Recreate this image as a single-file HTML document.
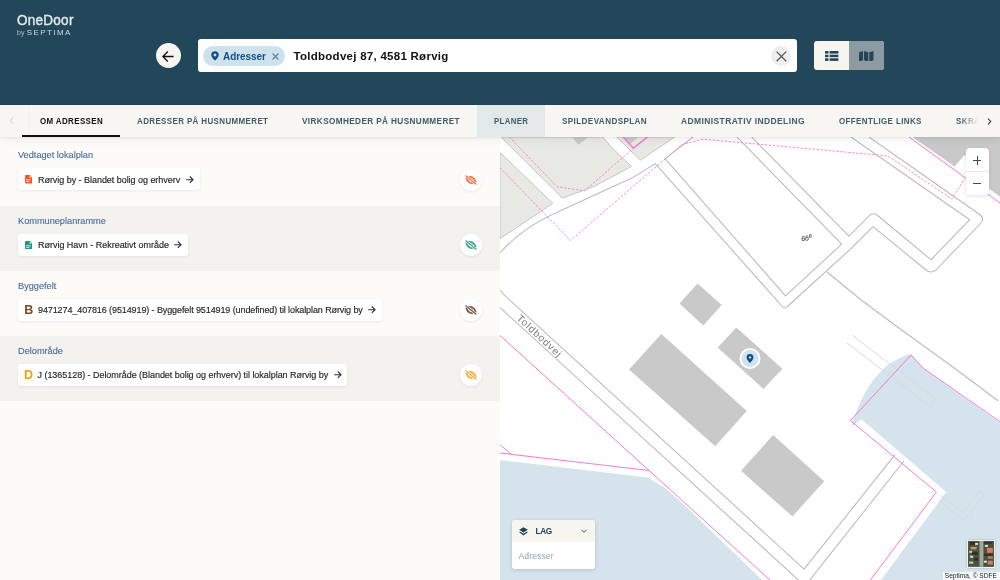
<!DOCTYPE html>
<html><head><meta charset="utf-8">
<style>
*{box-sizing:border-box;margin:0;padding:0}
html,body{width:1000px;height:580px;overflow:hidden;background:#fcfbf7}
body{position:relative;font-family:"Liberation Sans",sans-serif}
.abs{position:absolute}
#hdr{left:0;top:0;width:1000px;height:105.5px;background:#22475a}
.logo1{left:16.6px;top:11px;color:#e3e7ea;font-size:15px;font-weight:normal;-webkit-text-stroke:0.45px #e3e7ea;letter-spacing:0.3px;white-space:nowrap;transform:scaleX(0.9);transform-origin:0 0}
.logo2{left:17px;top:28px;color:#d4dbe0;font-size:8px;white-space:nowrap}
.back{left:156px;top:43.3px;width:25.2px;height:25.2px;border-radius:50%;background:#f7f5f0}
.search{left:197.6px;top:39.2px;width:599.6px;height:33px;border-radius:3px;background:#fff}
.chip{left:203.2px;top:46px;width:81.6px;height:20px;border-radius:10px;background:#cfe2ec}
.chiptxt{left:223px;top:50.5px;font-size:10px;letter-spacing:-0.08px;font-weight:bold;color:#104d8a;white-space:nowrap}
.q{left:293.5px;top:49.5px;font-size:11.5px;letter-spacing:0.27px;font-weight:bold;color:#111;white-space:nowrap}
.clr{left:771px;top:46px;width:20px;height:20px;border-radius:50%;background:#eeeff0}
.tog{left:814px;top:41.2px;width:69.6px;height:28.8px;border-radius:3px;background:#f7f5f0;overflow:hidden}
.tog2{left:35px;top:0;width:34.6px;height:28.8px;background:#8e9aa2}
#tabs{left:0;top:105px;width:1000px;height:32px;background:#f7f6f2;box-shadow:0 1px 3px rgba(0,0,0,0.06),0 3px 10px rgba(0,0,0,0.06);z-index:5}
.tab{top:11px;font-size:9.3px;transform-origin:0 0;font-weight:bold;color:#3f5b6c;white-space:nowrap}
.sec{left:0;width:500px;height:65px}
.stitle{left:18px;font-size:9.2px;color:#45699a;white-space:nowrap;-webkit-text-stroke:0.1px #45699a}
.card{left:18px;height:22px;background:#fff;border-radius:3px;box-shadow:0 1px 3px rgba(0,0,0,0.07)}
.ctxt{font-size:9px;color:#262626;white-space:nowrap;top:6.5px;left:20px;-webkit-text-stroke:0.15px #262626}
.eye{left:460px;width:22px;height:22px;border-radius:50%;background:#fff;box-shadow:0 1px 3px rgba(0,0,0,0.08)}
#map{left:500px;top:137px;width:500px;height:443px;background:#fff;overflow:hidden}
</style></head><body><div id="root" style="position:absolute;left:0;top:0;width:1000px;height:580px;will-change:transform">
<div id="hdr" class="abs">
  <div class="abs logo1">OneDoor</div>
  <div class="abs logo2"><span style="font-size:7px;color:#aebbc3">by</span> <span style="letter-spacing:1.45px">SEPTIMA</span></div>
  <div class="abs back"><svg class="abs" style="left:6.4px;top:7.3px" width="12" height="11" viewBox="0 0 12 11"><path d="M11.6,5.5 L1,5.5 M5.8,0.6 L0.9,5.5 L5.8,10.4" fill="none" stroke="#111" stroke-width="1.35"/></svg></div>
  <div class="abs search"></div>
  <div class="abs chip"></div>
  <svg class="abs" style="left:211px;top:51px" width="8" height="10" viewBox="0 0 8 10"><path d="M4,0.2 C6.1,0.2 7.8,1.9 7.8,4 C7.8,6.3 4,9.6 4,9.6 C4,9.6 0.2,6.3 0.2,4 C0.2,1.9 1.9,0.2 4,0.2 Z M4,2.5 A1.45,1.45 0 1 0 4.01,2.5 Z" fill="#104d8a" fill-rule="evenodd"/></svg>
  <div class="abs chiptxt">Adresser</div>
  <svg class="abs" style="left:272.2px;top:52.6px" width="7" height="7" viewBox="0 0 7 7"><path d="M0.5,0.5 L6.5,6.5 M6.5,0.5 L0.5,6.5" stroke="#5b84ab" stroke-width="1.2"/></svg>
  <div class="abs q">Toldbodvej 87, 4581 Rørvig</div>
  <div class="abs clr"><svg class="abs" style="left:4.6px;top:4.6px" width="11" height="11" viewBox="0 0 11 11"><path d="M0.6,0.6 L10.2,10.2 M10.2,0.6 L0.6,10.2" stroke="#555" stroke-width="1.25"/></svg></div>
  <div class="abs tog"><div class="abs tog2"></div>
    <svg class="abs" style="left:11px;top:9.8px" width="13.5" height="10" viewBox="0 0 13.5 10"><g fill="#22475a"><rect x="0" y="0" width="3.5" height="2.6"/><rect x="4.6" y="0" width="8.8" height="2.6"/><rect x="0" y="3.7" width="3.5" height="2.5"/><rect x="4.6" y="3.7" width="8.8" height="2.5"/><rect x="0" y="7.3" width="3.5" height="2.6"/><rect x="4.6" y="7.3" width="8.8" height="2.6"/></g></svg>
    <svg class="abs" style="left:45px;top:9.6px" width="14.5" height="10.6" viewBox="0 0 14.5 10.6"><g fill="#22475a"><path d="M0,1.3 L4,0 L4,9.3 L0,10.6 Z"/><path d="M5,0 L9.3,1.3 L9.3,10.6 L5,9.3 Z"/><path d="M10.3,1.3 L14.5,0 L14.5,9.3 L10.3,10.6 Z"/></g></svg>
  </div>
</div>
<div id="tabs" class="abs">
  <div class="abs" style="left:0;top:0;width:28px;height:32px;background:#f7f6f2;box-shadow:1px 0 2px rgba(0,0,0,0.03)"></div>
  <svg class="abs" style="left:9px;top:12px" width="5" height="7" viewBox="0 0 5 7"><path d="M4,0.6 L1.2,3.5 L4,6.4" fill="none" stroke="#c8cacb" stroke-width="1"/></svg>
  <div class="abs tab" style="left:39.6px;color:#111;;letter-spacing:0.45px;transform:scaleX(0.855)">OM ADRESSEN</div>
  <div class="abs" style="left:22px;top:30px;width:98px;height:2px;background:#111"></div>
  <div class="abs tab" style="left:137px;;letter-spacing:0.45px;transform:scaleX(0.856)">ADRESSER PÅ HUSNUMMERET</div>
  <div class="abs tab" style="left:302px;;letter-spacing:0.45px;transform:scaleX(0.88)">VIRKSOMHEDER PÅ HUSNUMMERET</div>
  <div class="abs" style="left:477px;top:0;width:68px;height:32px;background:#e3e8e9"></div>
  <div class="abs tab" style="left:494px;;letter-spacing:0.45px;transform:scaleX(0.84)">PLANER</div>
  <div class="abs tab" style="left:562px;;letter-spacing:0.45px;transform:scaleX(0.873)">SPILDEVANDSPLAN</div>
  <div class="abs tab" style="left:681px;;letter-spacing:0.45px;transform:scaleX(0.91)">ADMINISTRATIV INDDELING</div>
  <div class="abs tab" style="left:839px;;letter-spacing:0.45px;transform:scaleX(0.857)">OFFENTLIGE LINKS</div>
  <div class="abs tab" style="left:955.6px;letter-spacing:0.45px;transform:scaleX(0.86)">SKRÅ</div>
  <div class="abs" style="left:960px;top:0;width:18px;height:32px;background:linear-gradient(90deg,rgba(247,246,242,0),#f7f6f2)"></div>
  <div class="abs" style="left:978px;top:0;width:22px;height:32px;background:#f7f6f2"></div>
  <svg class="abs" style="left:986.5px;top:12.5px" width="5" height="7" viewBox="0 0 5 7"><path d="M1,0.6 L3.8,3.5 L1,6.4" fill="none" stroke="#444" stroke-width="1.1"/></svg>
</div>
<div class="abs sec" style="top:140.3px;background:#fcfbf7">
  <div class="abs stitle" style="top:10px">Vedtaget lokalplan</div>
  <div class="abs card" style="top:28px;width:182px"><svg class="abs" style="left:7px;top:7px" width="7.2" height="8.6" viewBox="0 0 7.2 8.6"><path d="M1,0 L4.8,0 L7.2,2.4 L7.2,7.6 Q7.2,8.6 6.2,8.6 L1,8.6 Q0,8.6 0,7.6 L0,1 Q0,0 1,0 Z" fill="#ef5a22"/><circle cx="5.2" cy="2.1" r="0.8" fill="#fff"/><rect x="0.9" y="4.3" width="4.8" height="0.9" fill="#fff" opacity="0.85"/><rect x="0.9" y="5.9" width="3.6" height="0.9" fill="#fff" opacity="0.85"/></svg><div class="abs ctxt" style="letter-spacing:-0.04px">Rørvig by - Blandet bolig og erhverv</div><svg class="abs" style="left:168px;top:7.4px" width="8" height="8" viewBox="0 0 8 8"><path d="M0.2,3.7 L7,3.7 M3.8,0.5 L7,3.7 L3.8,6.9" fill="none" stroke="#333" stroke-width="1.15"/></svg></div>
  <div class="abs eye" style="top:28.3px"><svg class="abs" style="left:5px;top:6px" width="12" height="10" viewBox="0 0 12 10"><g transform="rotate(22 6 5)"><path d="M1,5 Q6,-1 11,5 Q6,11 1,5 Z" fill="none" stroke="#f07048" stroke-width="1.7"/><circle cx="6.2" cy="4.8" r="1.6" fill="#f07048"/></g><path d="M0.6,0.5 L11.4,9.5" stroke="#fff" stroke-width="2.4"/><path d="M0.6,0.5 L11.4,9.5" stroke="#f07048" stroke-width="1.15"/></svg></div>
</div>
<div class="abs sec" style="top:205.5px;background:#f3f2ee">
  <div class="abs stitle" style="top:10px">Kommuneplanramme</div>
  <div class="abs card" style="top:28px;width:170px"><svg class="abs" style="left:7px;top:7px" width="7.2" height="8.6" viewBox="0 0 7.2 8.6"><path d="M1,0 L4.8,0 L7.2,2.4 L7.2,7.6 Q7.2,8.6 6.2,8.6 L1,8.6 Q0,8.6 0,7.6 L0,1 Q0,0 1,0 Z" fill="#1e9888"/><circle cx="5.2" cy="2.1" r="0.8" fill="#fff"/><rect x="0.9" y="4.3" width="4.8" height="0.9" fill="#fff" opacity="0.85"/><rect x="0.9" y="5.9" width="3.6" height="0.9" fill="#fff" opacity="0.85"/></svg><div class="abs ctxt" style="letter-spacing:-0.02px">Rørvig Havn - Rekreativt område</div><svg class="abs" style="left:155.8px;top:7.4px" width="8" height="8" viewBox="0 0 8 8"><path d="M0.2,3.7 L7,3.7 M3.8,0.5 L7,3.7 L3.8,6.9" fill="none" stroke="#333" stroke-width="1.15"/></svg></div>
  <div class="abs eye" style="top:28.3px"><svg class="abs" style="left:5px;top:6px" width="12" height="10" viewBox="0 0 12 10"><g transform="rotate(22 6 5)"><path d="M1,5 Q6,-1 11,5 Q6,11 1,5 Z" fill="none" stroke="#3aa595" stroke-width="1.7"/><circle cx="6.2" cy="4.8" r="1.6" fill="#3aa595"/></g><path d="M0.6,0.5 L11.4,9.5" stroke="#fff" stroke-width="2.4"/><path d="M0.6,0.5 L11.4,9.5" stroke="#3aa595" stroke-width="1.15"/></svg></div>
</div>
<div class="abs sec" style="top:270.5px;background:#fcfbf7">
  <div class="abs stitle" style="top:10px">Byggefelt</div>
  <div class="abs card" style="top:28px;width:364px"><div class="abs" style="left:6.2px;top:4.6px;font-size:12.5px;font-weight:bold;color:#7a4a2f;line-height:14px">B</div><div class="abs ctxt" style="letter-spacing:-0.1px">9471274_407816 (9514919) - Byggefelt 9514919 (undefined) til lokalplan Rørvig by</div><svg class="abs" style="left:350px;top:7.4px" width="8" height="8" viewBox="0 0 8 8"><path d="M0.2,3.7 L7,3.7 M3.8,0.5 L7,3.7 L3.8,6.9" fill="none" stroke="#333" stroke-width="1.15"/></svg></div>
  <div class="abs eye" style="top:28.3px"><svg class="abs" style="left:5px;top:6px" width="12" height="10" viewBox="0 0 12 10"><g transform="rotate(22 6 5)"><path d="M1,5 Q6,-1 11,5 Q6,11 1,5 Z" fill="none" stroke="#7b5847" stroke-width="1.7"/><circle cx="6.2" cy="4.8" r="1.6" fill="#7b5847"/></g><path d="M0.6,0.5 L11.4,9.5" stroke="#fff" stroke-width="2.4"/><path d="M0.6,0.5 L11.4,9.5" stroke="#7b5847" stroke-width="1.15"/></svg></div>
</div>
<div class="abs sec" style="top:335.8px;background:#f3f2ee">
  <div class="abs stitle" style="top:10px">Delområde</div>
  <div class="abs card" style="top:28px;width:329px"><div class="abs" style="left:6px;top:4.6px;font-size:12.5px;font-weight:bold;color:#f2a20a;line-height:14px">D</div><div class="abs ctxt" style="left:19.5px;letter-spacing:-0.04px">J (1365128) - Delområde (Blandet bolig og erhverv) til lokalplan Rørvig by</div><svg class="abs" style="left:315.8px;top:7.4px" width="8" height="8" viewBox="0 0 8 8"><path d="M0.2,3.7 L7,3.7 M3.8,0.5 L7,3.7 L3.8,6.9" fill="none" stroke="#333" stroke-width="1.15"/></svg></div>
  <div class="abs eye" style="top:28.3px"><svg class="abs" style="left:5px;top:6px" width="12" height="10" viewBox="0 0 12 10"><g transform="rotate(22 6 5)"><path d="M1,5 Q6,-1 11,5 Q6,11 1,5 Z" fill="none" stroke="#f1ad3c" stroke-width="1.7"/><circle cx="6.2" cy="4.8" r="1.6" fill="#f1ad3c"/></g><path d="M0.6,0.5 L11.4,9.5" stroke="#fff" stroke-width="2.4"/><path d="M0.6,0.5 L11.4,9.5" stroke="#f1ad3c" stroke-width="1.15"/></svg></div>
</div>
<div id="map" class="abs">
<svg class="abs" style="left:0;top:0" width="500" height="443" viewBox="500 137 500 443">
<rect x="500" y="137" width="500" height="443" fill="#ffffff"/>
<g fill="#d4e3ec">
<polygon points="500,460 647.6,477.4 665,488 680,500.9 762,580 500,580"/>
<path d="M851,427 Q869,367 908,354.6 L911,354.6 L923.4,368.8 L1000,423 L1000,580 L881,580 L946.2,492 L861.4,419.2 Z"/>
</g>
<g fill="#e9e9e4" stroke="#c6c6c2" stroke-width="1">
<polygon points="501,137 562.4,198.2 595,186 631.4,166.4 611.8,147.5 602.7,137"/>
<polygon points="500,152.5 552.9,203.4 500,238.6"/>
<polygon points="616.7,137 640.5,160.1 674.8,137"/>
</g>
<g fill="#c9c9c9">
<polygon points="571.9,137 588.7,137 578.2,144.7"/>
<polygon points="624,137 638,137 630.7,144"/>
<polygon points="912.4,137 1000,137 1000,196.8 989,188.6 964.8,154.8 954.5,166.5"/>
<polygon points="697.6,283.4 721.6,304.9 703.3,325.6 679.5,303.6"/>
<polygon points="736.4,327.4 782.4,368.8 763.5,389 717.7,347.6"/>
<polygon points="661.4,334.1 746.7,411 715.2,446.2 629,369.6"/>
<polygon points="773.1,435.1 824.3,481.3 792.4,516.4 741.1,470.8"/>
</g>
<g fill="none" stroke="#dadada" stroke-width="1">
<polyline points="852.3,335.2 935,398.5 931,407 847,343"/>
<polyline points="940.2,494.7 963.5,512.8 979,490.8 984.2,494.6 963.5,520.5 939,499.8"/>
</g>
<g fill="none" stroke="#bababa" stroke-width="1.05" stroke-linejoin="round">
<path d="M500,253 Q522,227 562.6,209.7 L632.8,177.6 L655.2,163.6 L781,305 Q784.2,310 788,306 L851,248.6 L873.1,226.6 L926,270 Q931,274 936,270 L981,223 Q985,218 979,214 L869,137"/>
<path d="M693,137 L665,158.7 L785.5,295.9 L841.7,244.1 L736.9,137"/>
<path d="M751.6,137 L848.9,236.2 L869,216 Q873,212 877,215 L931,259.7 L969.7,219.7 L851,137"/>
<path d="M827,272 L861.3,300 L901.5,330 L951.9,366.2 L998.4,401"/>
<path d="M500,290.3 Q505,296 510.3,300.7 L804.1,569.1 L895,454.6"/>
<path d="M500,307.6 L805,586 L904,461"/>
</g>
<g fill="none" stroke="#f27ad2" stroke-width="1">
<path d="M500,335.5 L771,581"/>
<path d="M500,453 L649,470.5"/>
<path d="M500,444.8 L511.6,454.5"/>
<path d="M850.5,420.5 L911,355 L923.4,368.3 L1000,421.8"/>
<path d="M850.5,420.5 L936.4,492 L870.4,580"/>
<path d="M909,137 L1000,203"/>
<path d="M623,137 L633.5,148.2 L647.5,137" stroke-width="1.5"/>
</g>
<g fill="none" stroke="#f58ad8" stroke-width="1" stroke-dasharray="2.4,1.6">
<path d="M509.5,137 L557,186.8 L584.6,190.8 L633.5,148.2"/>
<path d="M500,167.8 L570.5,240.5 L617.4,200 L681.8,144.7 L702.6,139.1 L830,150.7 L888,156 L951.8,199 L965,178.5"/>
</g>
<text transform="translate(537.2,338.6) rotate(43)" text-anchor="middle" font-family="Liberation Sans" font-size="10.2" letter-spacing="0.9" fill="#7c7c7c" stroke="#ffffff" stroke-width="1.6" paint-order="stroke" stroke-linejoin="round">Toldbodvej</text>
<text x="801" y="240.5" transform="rotate(-8 806 238)" font-family="Liberation Sans" font-style="italic" font-size="7" fill="#222">66<tspan font-size="5" dy="-2">B</tspan></text>
<circle cx="750" cy="358.4" r="9.5" fill="#cfe3ee" stroke="#ffffff" stroke-width="2"/>
<path d="M750,354 a3.4,3.4 0 0 1 3.4,3.4 c0,2.3 -3.4,5.4 -3.4,5.4 c0,0 -3.4,-3.1 -3.4,-5.4 a3.4,3.4 0 0 1 3.4,-3.4 z M750,356.2 a1.2,1.2 0 1 0 0.01,0 z" fill="#0f4c86" fill-rule="evenodd"/>
</svg>
<div class="abs" style="left:465.5px;top:10.9px;width:23.2px;height:46.9px;background:#fff;border-radius:4px;box-shadow:0 1px 4px rgba(0,0,0,0.12)">
  <div class="abs" style="left:0;top:23.4px;width:23.2px;height:1px;background:#e3e9ec"></div>
  <div class="abs" style="left:7.4px;top:11.9px;width:8.4px;height:1.2px;background:#2f4e60"></div>
  <div class="abs" style="left:11px;top:8.3px;width:1.2px;height:8.4px;background:#2f4e60"></div>
  <div class="abs" style="left:7.4px;top:35.1px;width:8.4px;height:1.2px;background:#2f4e60"></div>
</div>
<div class="abs" style="left:12px;top:383px;width:83px;height:49px;background:#fff;border-radius:3px;box-shadow:0 1px 4px rgba(0,0,0,0.15);overflow:hidden">
  <div class="abs" style="left:0;top:0;width:83px;height:21.5px;background:#f7f5f0"></div>
  <svg class="abs" style="left:6.5px;top:6.5px" width="9" height="9" viewBox="0 0 9 9"><path d="M4.5,0.2 L8.8,2.8 L4.5,5.4 L0.2,2.8 Z" fill="#1f4255"/><path d="M0.9,4.6 L4.5,6.8 L8.1,4.6 L8.8,5.3 L4.5,8.6 L0.2,5.3 Z" fill="#1f4255"/></svg>
  <div class="abs" style="left:23.5px;top:6.2px;font-size:8.3px;letter-spacing:-0.35px;font-weight:bold;color:#1f4255;white-space:nowrap">LAG</div>
  <svg class="abs" style="left:69.3px;top:9px" width="6" height="5" viewBox="0 0 6 5"><path d="M0.5,0.8 L3,3.3 L5.5,0.8" fill="none" stroke="#1f4255" stroke-width="0.9"/></svg>
  <div class="abs" style="left:6.5px;top:30.5px;font-size:8.6px;letter-spacing:0.1px;color:#94a3ab;white-space:nowrap">Adresser</div>
</div>
<div class="abs" style="left:466.7px;top:403.3px;width:28.5px;height:28px;background:#f4f2ee;padding:1.2px;box-shadow:0 0 2px rgba(0,0,0,0.25)">
  <svg width="26" height="25.6" viewBox="0 0 26 26" style="display:block"><rect width="26" height="26" fill="#3b4535"/>
  <rect x="0" y="0" width="12" height="26" fill="#4a5640"/><rect x="15" y="0" width="11" height="26" fill="#46523d"/>
  <rect x="11.5" y="0" width="4" height="26" fill="#a5a59c"/>
  <rect x="2" y="1" width="5" height="3" fill="#2a3226"/><rect x="7" y="2" width="3" height="2" fill="#d8dcd4"/>
  <rect x="2.5" y="6" width="6" height="2.5" fill="#d98a66"/><rect x="1" y="10" width="3" height="2" fill="#c9cdc4"/>
  <rect x="4" y="11" width="6" height="3" fill="#2c3528"/><rect x="2" y="15" width="3" height="2" fill="#e4e6e0"/>
  <rect x="6" y="17" width="4" height="3" fill="#2a3025"/><rect x="1" y="21" width="4" height="2" fill="#cfd3ca"/>
  <rect x="16" y="1" width="8" height="2" fill="#2a3a45"/><rect x="17" y="4" width="3" height="2" fill="#dfe2dc"/>
  <rect x="19" y="7" width="6" height="5" fill="#d47a62"/><rect x="16" y="13" width="9" height="2" fill="#2b3328"/>
  <rect x="20" y="15.5" width="5" height="2.5" fill="#c87a66"/><rect x="16" y="20" width="3" height="2" fill="#e0e2dc"/>
  <rect x="20" y="20" width="5" height="4" fill="#c98070"/>
  </svg>
</div>
<div class="abs" style="left:442.8px;top:434.7px;width:57.2px;height:8.3px;background:rgba(255,255,255,0.8)">
  <div class="abs" style="left:2px;top:0.5px;font-size:6.6px;color:#222;white-space:nowrap">Septima, © SDFE</div>
</div>

</div>
</div></body></html>
